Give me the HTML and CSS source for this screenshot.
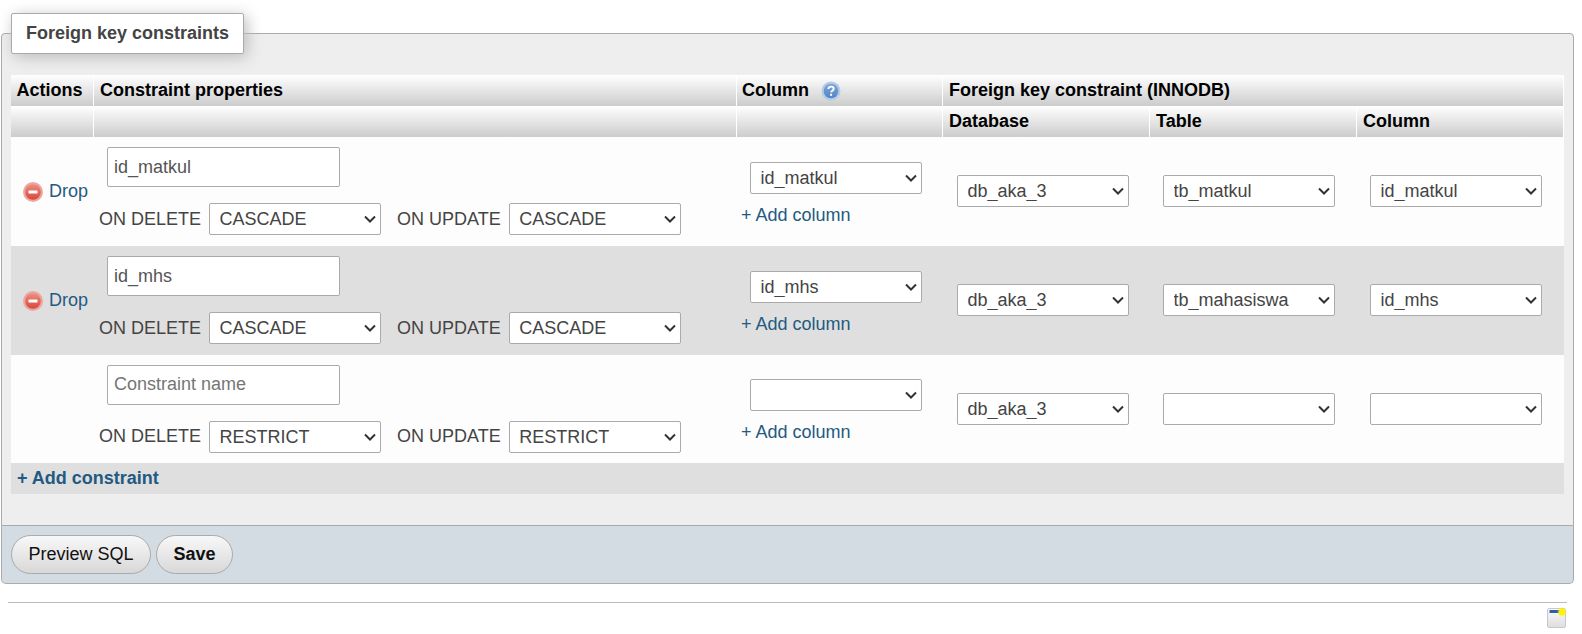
FILE: index.html
```html
<!DOCTYPE html>
<html lang="en">
<head>
<meta charset="utf-8">
<title>Foreign key constraints</title>
<link rel="stylesheet" href="styles.css">
</head>
<body>
<main class="page">
  <form class="panel">
    <fieldset class="box">
      <legend class="box-title">Foreign key constraints</legend>
      <table class="fk">
        <colgroup>
          <col class="c-act"><col class="c-prop"><col class="c-col"><col class="c-ref"><col class="c-ref"><col class="c-ref">
        </colgroup>
        <thead>
          <tr>
            <th class="th-act">Actions</th>
            <th>Constraint properties</th>
            <th class="th-col">Column
              <svg class="help" width="20" height="20" viewBox="0 0 20 20" aria-hidden="true">
                <defs><linearGradient id="hg" x1="0" y1="0" x2="0" y2="1"><stop offset="0" stop-color="#7fa6d8"/><stop offset="1" stop-color="#4f86c6"/></linearGradient></defs>
                <circle cx="10" cy="10" r="9.500" fill="#b4cbe8"/>
                <circle cx="10" cy="10" r="7.300" fill="url(#hg)"/>
                <path d="M7.300 8c.2-1.600 1.300-2.400 2.800-2.400s2.600.9 2.600 2.100c0 2-2.500 1.900-2.600 3.700" fill="none" stroke="#fff" stroke-width="1.900"/>
                <rect x="9.100" y="12.800" width="2" height="2" fill="#fff"/>
              </svg>
            </th>
            <th colspan="3">Foreign key constraint (INNODB)</th>
          </tr>
          <tr>
            <th></th><th></th><th></th>
            <th>Database</th><th>Table</th><th>Column</th>
          </tr>
        </thead>
        <tbody>
          <tr class="odd">
            <td class="act"><a class="drop" href="#"><svg class="minus" width="20" height="20" viewBox="0 0 20 20" aria-hidden="true"><use href="#dropicon"/></svg>Drop</a></td>
            <td class="props">
              <input class="name" type="text" value="id_matkul">
              <div class="rules">
                <label class="rule">ON DELETE <select class="sel"><option>CASCADE</option></select></label>
                <label class="rule">ON UPDATE <select class="sel"><option>CASCADE</option></select></label>
              </div>
            </td>
            <td class="cols"><select class="sel sel-ref"><option>id_matkul</option></select><a class="add" href="#">+ Add column</a></td>
            <td class="ref"><select class="sel sel-ref"><option>db_aka_3</option></select></td>
            <td class="ref ref-next"><select class="sel sel-ref"><option>tb_matkul</option></select></td>
            <td class="ref ref-next"><select class="sel sel-ref"><option>id_matkul</option></select></td>
          </tr>
          <tr class="even">
            <td class="act"><a class="drop" href="#"><svg class="minus" width="20" height="20" viewBox="0 0 20 20" aria-hidden="true"><use href="#dropicon"/></svg>Drop</a></td>
            <td class="props">
              <input class="name" type="text" value="id_mhs">
              <div class="rules">
                <label class="rule">ON DELETE <select class="sel"><option>CASCADE</option></select></label>
                <label class="rule">ON UPDATE <select class="sel"><option>CASCADE</option></select></label>
              </div>
            </td>
            <td class="cols"><select class="sel sel-ref"><option>id_mhs</option></select><a class="add" href="#">+ Add column</a></td>
            <td class="ref"><select class="sel sel-ref"><option>db_aka_3</option></select></td>
            <td class="ref ref-next"><select class="sel sel-ref"><option>tb_mahasiswa</option></select></td>
            <td class="ref ref-next"><select class="sel sel-ref"><option>id_mhs</option></select></td>
          </tr>
          <tr class="odd short">
            <td class="act"></td>
            <td class="props">
              <input class="name" type="text" placeholder="Constraint name">
              <div class="rules">
                <label class="rule">ON DELETE <select class="sel"><option>RESTRICT</option></select></label>
                <label class="rule">ON UPDATE <select class="sel"><option>RESTRICT</option></select></label>
              </div>
            </td>
            <td class="cols"><select class="sel sel-ref"><option></option></select><a class="add" href="#">+ Add column</a></td>
            <td class="ref"><select class="sel sel-ref"><option>db_aka_3</option></select></td>
            <td class="ref ref-next"><select class="sel sel-ref"><option></option></select></td>
            <td class="ref ref-next"><select class="sel sel-ref"><option></option></select></td>
          </tr>
          <tr class="even">
            <th class="addrow" colspan="6"><a href="#">+ Add constraint</a></th>
          </tr>
        </tbody>
      </table>
    </fieldset>
    <div class="footer">
      <button class="btn" type="button">Preview SQL</button>
      <button class="btn btn-save" type="button">Save</button>
    </div>
  </form>
  <hr class="rule-line">
  <div class="console">
    <svg width="20" height="21" viewBox="0 0 20 21" aria-hidden="true">
      <defs>
        <linearGradient id="wg" x1="0" y1="0" x2="0" y2="1"><stop offset="0" stop-color="#fbfbfb"/><stop offset="1" stop-color="#dedede"/></linearGradient>
        <radialGradient id="yg"><stop offset="0" stop-color="#fff200"/><stop offset="0.5" stop-color="#fff200"/><stop offset="1" stop-color="#fff200" stop-opacity="0"/></radialGradient>
      </defs>
      <rect x="0.500" y="1.500" width="18" height="19" rx="1.500" fill="url(#wg)" stroke="#c8c8c8"/>
      <rect x="2.500" y="3" width="11" height="3" fill="#2f5ea8"/>
      <circle cx="15" cy="5" r="5" fill="url(#yg)"/>
    </svg>
  </div>
</main>
<svg class="defs" width="0" height="0" aria-hidden="true">
  <defs>
    <linearGradient id="rg" x1="0" y1="0" x2="0" y2="1"><stop offset="0" stop-color="#ee8d80"/><stop offset="1" stop-color="#d8473d"/></linearGradient>
    <symbol id="dropicon" viewBox="0 0 20 20">
      <circle cx="10" cy="10" r="10" fill="#eaa79e"/>
      <circle cx="10" cy="10" r="7.800" fill="url(#rg)"/>
      <rect x="5.500" y="8.500" width="9" height="3" rx="0.500" fill="#fff"/>
    </symbol>
  </defs>
</svg>
</body>
</html>
```
FILE: styles.css
```css
* { box-sizing: border-box; }
html, body { margin: 0; padding: 0; background: #fff; }
body { font-family: "Liberation Sans", Arial, sans-serif; font-size: 18px; color: #444; }
.page { padding: 13px 8px 0 1px; width: 1582px; }
a { color: #235a81; text-decoration: none; }
.panel { margin: 0; width: 1573px; }
.box {
  margin: 0; min-width: 0; padding: 21px 9px 31px;
  border: 1px solid #aaa; border-radius: 4px 4px 0 0;
  background: #eee;
}
.box-title {
  padding: 10px 14px 8px; height: 41px; width: 233px; margin: 0;
  background: #fff; border: 1px solid #aaa; border-radius: 2px;
  box-shadow: 3px 3px 15px #bbb;
  font-weight: bold; line-height: 19px; white-space: nowrap;
}
.fk { border-collapse: separate; border-spacing: 0; table-layout: fixed; width: 1553px; background: #fff; }
.c-act { width: 83px; } .c-prop { width: 643px; } .c-col { width: 206px; } .c-ref { width: 207px; }
.fk thead th {
  height: 31px; padding: 0 5px 2px 6px; text-align: left; color: #000; font-weight: bold;
  background: linear-gradient(#fff, #ccc); border-right: 1px solid #fff;
  line-height: 26px; vertical-align: middle;
}
.fk thead .th-act { padding-left: 5.5px; }
.fk thead .th-col { padding-left: 5px; }
.fk tbody tr { height: 109px; }
.fk tbody tr.short { height: 108px; }
.fk tbody td { padding: 0; vertical-align: middle; }
.odd { background: #fdfdfd; }
.even { background: #dfdfdf; }
.act { padding-left: 12px !important; }
.drop { display: flex; align-items: center; gap: 6px; }
.help { vertical-align: -5px; margin-left: 7px; }
.defs { position: absolute; }
.props { padding: 0 0 0 5px !important; }
.name {
  display: block; width: 233px; height: 40px; margin: -1px 0 16px 8px; padding: 0 6px;
  border: 1px solid #aaa; border-radius: 2px; background: #fff; color: #555;
  font: 18px "Liberation Sans", Arial, sans-serif;
}
.name::placeholder { color: #757575; }
.rules { display: flex; gap: 16px; }
.rule { display: flex; align-items: center; gap: 8px; }
.sel {
  appearance: none;
  width: 172px; height: 32px; padding: 0 26px 0 9.5px; margin: 0;
  border: 1px solid #aaa; border-radius: 2px; color: #444;
  font: 18px "Liberation Sans", Arial, sans-serif;
  background: #fff url("data:image/svg+xml,%3Csvg xmlns='http://www.w3.org/2000/svg' width='12' height='8' viewBox='0 0 12 8'%3E%3Cpath d='M1 1.500l5 5 5-5' fill='none' stroke='%23333' stroke-width='2'/%3E%3C/svg%3E") no-repeat right 4px center;
}
.sel-ref { display: block; }
.cols { padding-left: 13px !important; }
.ref { padding-left: 14px !important; padding-bottom: 1px !important; }
.ref-next { padding-left: 13px !important; }
.add { display: block; margin: 11px 0 0 -9px; line-height: 20px; }
.cols .sel { margin-top: 3px; }
.fk tbody tr .addrow { height: 31px; padding: 0 6px; text-align: left; font-weight: bold; background: #dfdfdf; }
.fk tbody tr:last-child { height: 31px; }
.footer {
  display: flex; gap: 5px; height: 58px; padding: 9px 9px 0;
  border: 1px solid #aaa; border-top: 0; border-radius: 0 0 5px 5px;
  background: #d3dce3;
}
.btn {
  height: 39px; padding: 0 16.500px; border: 1px solid #aaa; border-radius: 20px;
  background: linear-gradient(#f8f8f8, #d8d8d8); color: #111;
  font: 18px "Liberation Sans", Arial, sans-serif;
}
.btn-save { font-weight: bold; }
.rule-line { margin: 18px 0 0 7px; width: 1559px; height: 1px; border: 0; background: #bbb; }
.console { display: flex; justify-content: flex-end; padding: 4px 0 0; margin-right: 7px; }
```
